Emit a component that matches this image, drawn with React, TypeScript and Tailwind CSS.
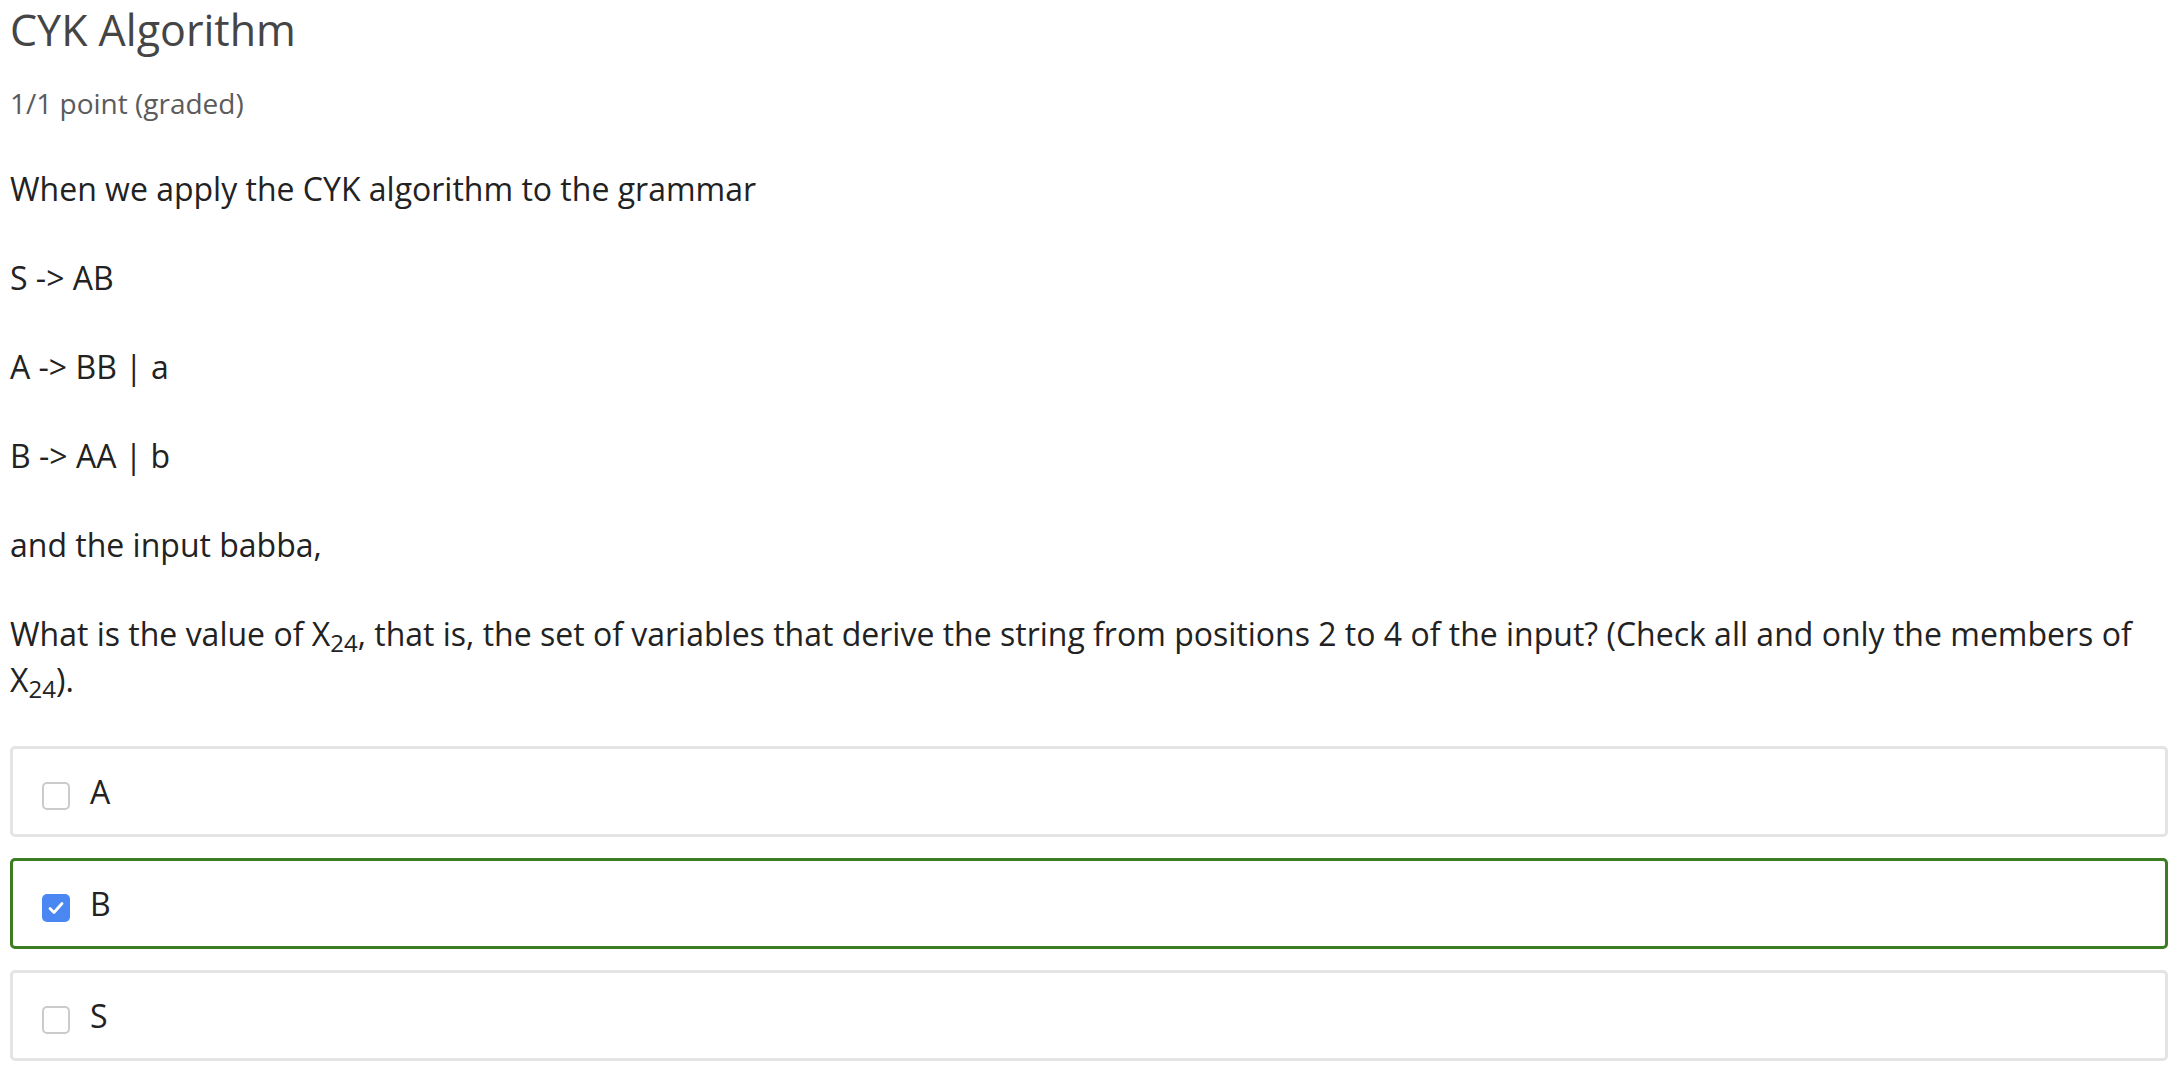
import React from 'react';

const grammar = ['S -> AB', 'A -> BB | a', 'B -> AA | b'];

const options = [
  { label: 'A', checked: false },
  { label: 'B', checked: true },
  { label: 'S', checked: false },
];

const Checkbox = ({ checked }: { checked: boolean }) =>
  checked ? (
    <span className="mt-[8px] flex h-[28px] w-[28px] shrink-0 items-center justify-center rounded-[5px] bg-[#4a87f2]">
      <svg width="20" height="20" viewBox="0 0 20 20" fill="none">
        <path d="M4 10.5 L8 14.5 L16 5.5" stroke="white" strokeWidth="2.8" strokeLinecap="round" strokeLinejoin="round" />
      </svg>
    </span>
  ) : (
    <span className="mt-[8px] block h-[28px] w-[28px] shrink-0 rounded-[5px] border-2 border-[#cbcbcb] bg-white" />
  );

const App = () => {
  return (
    <div
      className="min-h-screen bg-white pl-[10px] pr-[14px] pt-[4px]"
      style={{ fontFamily: '"Open Sans", "Noto Sans", sans-serif' }}
    >
      {/* Problem header */}
      <h3 className="text-[43px] leading-[52px] text-[#454545]">CYK Algorithm</h3>
      <div className="mt-[27px] text-[28px] leading-[40px] text-[#5b5b5b]">1/1 point (graded)</div>

      {/* Question body */}
      <div className="mt-[43px] flex flex-col gap-[43px] text-[32px] leading-[46px] text-[#222]">
        <p>When we apply the CYK algorithm to the grammar</p>
        {grammar.map((rule) => (
          <p key={rule}>{rule}</p>
        ))}
        <p>and the input babba,</p>
        <p>
          What is the value of X<sub>24</sub>, that is, the set of variables that derive the string from
          positions 2 to 4 of the input? (Check all and only the members of X<sub>24</sub>).
        </p>
      </div>

      {/* Choices */}
      <div className="mt-[43px] flex flex-col gap-[21px]">
        {options.map((o) => (
          <label
            key={o.label}
            className={`flex h-[91px] items-center gap-[20px] rounded-[5px] border-[3px] bg-white pl-[29px] ${
              o.checked ? 'border-[#3a7d22]' : 'border-[#e4e4e4]'
            }`}
          >
            <Checkbox checked={o.checked} />
            <span className="text-[32px] leading-[40px] text-[#222]">{o.label}</span>
          </label>
        ))}
      </div>
    </div>
  );
};

export default App;
